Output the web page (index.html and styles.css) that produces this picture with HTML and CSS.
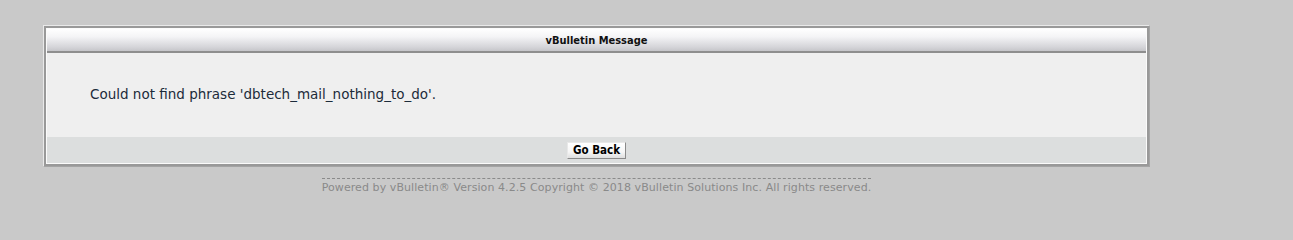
FILE: index.html
```html
<!DOCTYPE html>
<html>
<head>
<meta charset="utf-8">
<title>vBulletin Message</title>
<link rel="stylesheet" href="styles.css">
</head>
<body>
<div class="page">
  <div class="tborder">
    <div class="inner">
      <div class="thead">vBulletin Message</div>
      <div class="panel">
        <div class="message">Could not find phrase 'dbtech_mail_nothing_to_do'.</div>
      </div>
      <div class="tfoot">
        <button class="button" type="button">Go Back</button>
      </div>
    </div>
  </div>
  <div class="copyright"><span>Powered by vBulletin® Version 4.2.5 Copyright © 2018 vBulletin Solutions Inc. All rights reserved.</span></div>
</div>
</body>
</html>
```
FILE: styles.css
```css
html, body {
  margin: 0;
  padding: 0;
  background: #c9c9c9;
}
body {
  font-family: "DejaVu Sans", Verdana, sans-serif;
}
.page {
  width: 1107px;
  margin-left: 43px;
  padding-top: 25px;
}
.tborder {
  border-top: 1px solid #e9e9e9;
  border-left: 1px solid #e9e9e9;
  border-right: 1px solid #a4a4a4;
  border-bottom: 1px solid #a4a4a4;
  background: #999999;
  padding: 2px;
}
.inner {
  border: 1px solid #fbfbfb;
  background: #efefef;
}
.thead {
  height: 20px;
  padding-top: 2px;
  line-height: 20px;
  text-align: center;
  font-family: "DejaVu Sans Condensed", "DejaVu Sans", Verdana, sans-serif;
  font-weight: bold;
  font-size: 11px;
  color: #111;
  background: linear-gradient(to bottom, #ffffff 0%, #f4f4f6 35%, #d6d6da 80%, #c6c6ca 100%);
  border-bottom: 2px solid #8e8e8e;
}
.panel {
  height: 84px;
  display: flex;
  align-items: center;
  padding-left: 43px;
  background: #efefef;
}
.message {
  font-size: 13.5px;
  color: #1c2b3a;
  padding-bottom: 3px;
}
.tfoot {
  height: 26px;
  display: flex;
  align-items: center;
  justify-content: center;
  background: #dcdede;
}
.button {
  font-family: "DejaVu Sans Condensed", "DejaVu Sans", Verdana, sans-serif;
  font-weight: bold;
  font-size: 11.5px;
  color: #000;
  height: 17px;
  padding: 0 5px;
  border: 1px solid;
  border-color: #e8e8e8 #8a8a8a #8a8a8a #e8e8e8;
  background: linear-gradient(to bottom, #ffffff 0%, #f6f6f6 60%, #dedede 100%);
  line-height: 14px;
}
.copyright {
  text-align: center;
  padding-top: 9px;
}
.copyright span {
  display: inline-block;
  font-size: 11px;
  letter-spacing: 0.08px;
  color: #8a8a8a;
  border-top: 1px dashed #8a8a8a;
  padding-top: 2px;
}
```
